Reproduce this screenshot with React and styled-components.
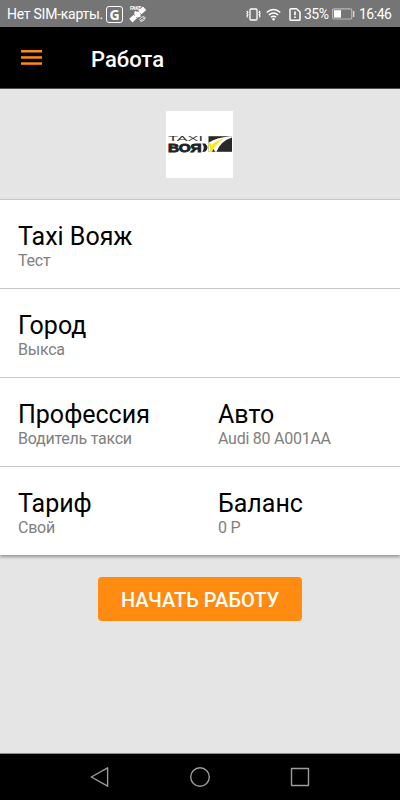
import React from "react";
import styled, { createGlobalStyle } from "styled-components";

const GlobalStyle = createGlobalStyle`
  * {
    box-sizing: border-box;
  }

  body {
    margin: 0;
    background: #e5e5e5;
    font-family: Roboto, "Liberation Sans", sans-serif;
  }
`;

const Screen = styled.div`
  display: flex;
  flex-direction: column;
  width: 400px;
  height: 800px;
  overflow: hidden;
  background: #e5e5e5;
`;

const StatusBar = styled.div`
  display: flex;
  align-items: center;
  flex: none;
  height: 27px;
  padding: 1px 8px 0 7px;
  background: #757575;
  color: #fff;
  font-size: 14px;
  line-height: 26px;
  white-space: nowrap;
`;

const StatusText = styled.span`
  width: ${(props) => props.$width}px;
  margin-left: ${(props) => props.$gap || 0}px;
  letter-spacing: ${(props) => props.$spacing || 0}px;
`;

const StatusIcon = styled.svg`
  flex: none;
  display: block;
  margin-left: ${(props) => props.$gap || 0}px;
`;

const StatusRight = styled.div`
  display: flex;
  align-items: center;
  margin-left: auto;
`;

const GpsBadge = styled.span`
  display: flex;
  align-items: center;
  justify-content: center;
  width: 17px;
  height: 17px;
  margin-left: 3px;
  border: 1px solid #fff;
  border-radius: 3px;
  font-family: "Open Sans", sans-serif;
  font-size: 14px;
  font-weight: 700;
  line-height: 15px;
`;

const AppBar = styled.header`
  display: flex;
  align-items: center;
  flex: none;
  height: 62px;
  padding: 3px 21px 0;
  border-bottom: 1px solid #4d4d4d;
  background: #000;
`;

const MenuButton = styled.button`
  width: 21px;
  margin: 0 49px 3px 0;
  padding: 0;
  border: none;
  background: none;
`;

const MenuIcon = styled.svg`
  display: block;
  width: 21px;
  height: 15px;
  fill: #ff8c10;
`;

const PageTitle = styled.h1`
  margin: 1px 0 0;
  color: #fff;
  font-size: 22px;
  font-weight: 500;
  line-height: 26px;
`;

const LogoArea = styled.div`
  display: flex;
  justify-content: center;
  flex: none;
  height: 110px;
  padding: 22px 1px 0 0;
`;

const Logo = styled.svg`
  display: block;
  width: 67px;
  height: 67px;
  background: #fff;
`;

const InfoList = styled.div`
  flex: none;
  box-shadow: 0 2px 3px rgba(0, 0, 0, 0.35);
`;

const InfoRow = styled.div`
  display: grid;
  grid-template-columns: 200px 200px;
  height: 89px;
  padding-top: 22px;
  border-top: 1px solid #c8c8c8;
  background: #fff;
`;

const InfoItem = styled.div`
  padding-left: 18px;
`;

const InfoTitle = styled.div`
  color: #000;
  font-size: 25px;
  line-height: 29px;
`;

const InfoValue = styled.div`
  color: #808080;
  font-size: 16px;
  letter-spacing: -0.25px;
  line-height: 19px;
`;

const Actions = styled.div`
  display: flex;
  justify-content: center;
  align-items: flex-start;
  flex: 1;
  padding-top: 22px;
`;

const StartButton = styled.button`
  width: 204px;
  height: 44px;
  padding: 2px 0 0;
  border: none;
  border-radius: 4px;
  background: #ff8c10;
  color: #fff;
  font-family: inherit;
  font-size: 20px;
  font-weight: 500;
  white-space: nowrap;
`;

const NavBar = styled.nav`
  display: flex;
  align-items: center;
  justify-content: center;
  gap: 78px;
  flex: none;
  height: 47px;
  border-top: 1px solid #8c8c8c;
  background: #000;
`;

const NavIcon = styled.svg`
  display: block;
  width: 22px;
  height: 22px;
  fill: none;
  stroke: #9c9c9c;
  stroke-width: 1.4;
  stroke-linejoin: round;
`;

const rows = [
  [{ title: "Taxi Вояж", value: "Тест" }],
  [{ title: "Город", value: "Выкса" }],
  [
    { title: "Профессия", value: "Водитель такси" },
    { title: "Авто", value: "Audi 80 A001AA" },
  ],
  [
    { title: "Тариф", value: "Свой" },
    { title: "Баланс", value: "0 Р" },
  ],
];

function SatelliteIcon() {
  return (
    <StatusIcon $gap={6} width="18" height="18" viewBox="0 0 18 18">
      <text x="1" y="5" fill="#fff" fontFamily="Roboto" fontSize="5" fontWeight="700" textLength="11">
        FAKE
      </text>
      <g fill="#fff" transform="rotate(-42 8.5 9.5)">
        <rect x="-.5" y="7.2" width="6" height="4.8" />
        <rect x="6" y="7" width="5" height="5.2" rx="1" />
        <rect x="11.6" y="7.2" width="6.4" height="4.8" />
        <rect x="4" y="9" width="9" height="1.2" />
      </g>
      <path d="M6 6.2l5.4 5.6M5.4 7.4l4 4" stroke="#fff" strokeWidth="1.6" />
      <path d="M10.3 14.8q1.2-3 5-3.4M11.5 16.6q4.3-.3 4.9-4.4M11 15.8q3-.8 4.6-3.8" fill="none" stroke="#e4e4e4" strokeWidth="1" />
    </StatusIcon>
  );
}

function VibrateIcon() {
  return (
    <StatusIcon width="15" height="13" viewBox="0 0 15 13" fill="none" stroke="#fff">
      <rect x="4" y="1" width="7" height="11" rx="1" strokeWidth="1.3" />
      <path d="M.8 3l1.2 1.2L.8 5.5 2 6.8.8 8.1 2 9.5M14.2 3L13 4.2l1.2 1.3L13 6.8l1.2 1.3L13 9.5" strokeWidth="1.1" />
    </StatusIcon>
  );
}

function WifiIcon() {
  return (
    <StatusIcon $gap={5} width="15" height="13" viewBox="0 0 15 13" fill="none" stroke="#fff" strokeWidth="1.4">
      <path d="M.7 4.6q6.8-6 13.6 0M2.8 7q4.7-4 9.4 0M4.9 9.3q2.6-2.2 5.2 0" />
      <circle cx="7.5" cy="11.2" r="1.2" fill="#fff" stroke="none" />
    </StatusIcon>
  );
}

function SimIcon() {
  return (
    <StatusIcon $gap={8} width="12" height="13" viewBox="0 0 12 13" fill="none" stroke="#fff">
      <path d="M1.7.8h5.8L11 4v7.3q0 1-1 1H2q-1 0-1-1V1.5z" strokeWidth="1.5" strokeLinejoin="round" />
      <path d="M6 3.6v3.7M6 8.4v1.7" strokeWidth="1.7" />
    </StatusIcon>
  );
}

function BatteryIcon() {
  return (
    <StatusIcon $gap={4} width="23" height="12" viewBox="0 0 23 12">
      <rect x=".6" y=".8" width="19.2" height="10.2" rx="1.5" fill="none" stroke="#b8b8b8" strokeWidth="1.2" />
      <rect x="2" y="2.2" width="7" height="7.4" fill="#fff" />
      <path d="M21.7 3v6" stroke="#d5d5d5" strokeWidth="1.4" />
    </StatusIcon>
  );
}

function TaxiLogo() {
  return (
    <Logo viewBox="0 0 67 67">
      <text x="2" y="30.2" fill="#333" fontFamily="Liberation Sans" fontSize="7" textLength="35" lengthAdjust="spacingAndGlyphs">
        TAXI
      </text>
      <text
        x="2"
        y="40.6"
        fill="#222"
        stroke="#222"
        strokeWidth=".8"
        fontFamily="Liberation Sans"
        fontSize="10.8"
        fontWeight="700"
        textLength="33.5"
        lengthAdjust="spacingAndGlyphs"
      >
        ВОЯ
      </text>
      <path d="M36.2 32.4h3q4.4 4 0 8.4h-3q3-4.200 0-8.400z" fill="#222" />
      <rect x="42.5" y="25.2" width="23.5" height="15.6" fill="#292929" />
      <path d="M42.5 31.8Q50 26.5 64 25.200h2v1.200Q54.500 30 50.500 40.800h-8z" fill="#fff" />
      <path d="M41.500 32h3.200l.6 2q5-4.500 12.500-6.200-7.500 4-12 13h-2.300l.5-4.200z" fill="#f7ea1b" />
      <path d="M47.500 38l1.700 2.800h-3.200z" fill="#292929" />
    </Logo>
  );
}

function App() {
  return (
    <>
      <GlobalStyle />
      <Screen>
        <StatusBar>
          <StatusText $width={96} $spacing={-0.25}>Нет SIM-карты.</StatusText>
          <GpsBadge>G</GpsBadge>
          <SatelliteIcon />
          <StatusRight>
            <VibrateIcon />
            <WifiIcon />
            <SimIcon />
            <StatusText $width={24} $gap={3} $spacing={-0.5}>35%</StatusText>
            <BatteryIcon />
            <StatusText $width={33} $gap={4} $spacing={-0.5}>16:46</StatusText>
          </StatusRight>
        </StatusBar>
        <AppBar>
          <MenuButton aria-label="Меню">
            <MenuIcon viewBox="0 0 21 15">
              <rect y="0" width="21" height="2.5" />
              <rect y="6.2" width="21" height="2.5" />
              <rect y="12.3" width="21" height="2.5" />
            </MenuIcon>
          </MenuButton>
          <PageTitle>Работа</PageTitle>
        </AppBar>
        <LogoArea>
          <TaxiLogo />
        </LogoArea>
        <InfoList>
          {rows.map((items) => (
            <InfoRow key={items[0].title}>
              {items.map((item) => (
                <InfoItem key={item.title}>
                  <InfoTitle>{item.title}</InfoTitle>
                  <InfoValue>{item.value}</InfoValue>
                </InfoItem>
              ))}
            </InfoRow>
          ))}
        </InfoList>
        <Actions>
          <StartButton>НАЧАТЬ РАБОТУ</StartButton>
        </Actions>
        <NavBar>
          <NavIcon viewBox="0 0 22 22">
            <path d="M2.3 11L18.6 1.8v18.4z" />
          </NavIcon>
          <NavIcon viewBox="0 0 22 22">
            <circle cx="11" cy="11" r="9.3" />
          </NavIcon>
          <NavIcon viewBox="0 0 22 22">
            <path d="M2.5 2.5h17v17h-17z" />
          </NavIcon>
        </NavBar>
      </Screen>
    </>
  );
}

export default App;
